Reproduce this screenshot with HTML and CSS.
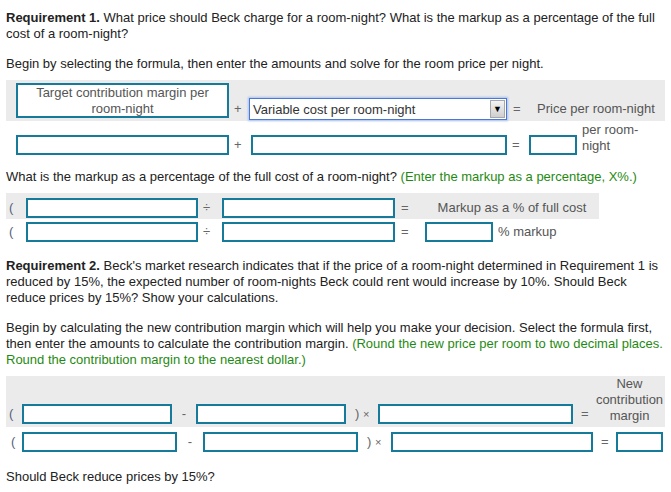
FILE: index.html
```html
<!DOCTYPE html>
<html>
<head>
<meta charset="utf-8">
<link rel="stylesheet" href="styles.css">
</head>
<body>
<div class="page">
  <p class="para"><b>Requirement 1.</b> What price should Beck charge for a room-night? What is the markup as a percentage of the full cost of a room-night?</p>
  <p class="para gap14">Begin by selecting the formula, then enter the amounts and solve for the room price per night.</p>

  <div class="band band1">
    <div class="hbox">Target contribution margin per room-night</div>
    <span class="op op-plus1">+</span>
    <div class="select"><span class="sel-text">Variable cost per room-night</span><span class="arrow">&#9660;</span></div>
    <span class="op op-eq1">=</span>
    <span class="lbl lbl1">Price per room-night</span>
  </div>
  <div class="row row1b">
    <span class="inp w213"></span>
    <span class="op op-plus2">+</span>
    <span class="inp w256"></span>
    <span class="op op-eq2">=</span>
    <span class="inp w48"></span>
    <span class="lbl unit">per room-night</span>
  </div>

  <p class="para gap14b">What is the markup as a percentage of the full cost of a room-night? <span class="green">(Enter the markup as a percentage, X%.)</span></p>

  <div class="band band2">
    <span class="paren p20">(</span>
    <span class="inp w172"></span>
    <span class="op op-div">&divide;</span>
    <span class="inp w173"></span>
    <span class="op op-eq3">=</span>
    <span class="lbl lbl2">Markup as a % of full cost</span>
  </div>
  <div class="row row2b">
    <span class="paren p20">(</span>
    <span class="inp w172"></span>
    <span class="op op-div">&divide;</span>
    <span class="inp w173"></span>
    <span class="op op-eq3">=</span>
    <span class="inp w68"></span>
    <span class="lbl unit2">% markup</span>
  </div>

  <p class="para gap16"><b>Requirement 2.</b> Beck's market research indicates that if the price of a room-night determined in Requirement 1 is reduced by 15%, the expected number of room-nights Beck could rent would increase by 10%. Should Beck reduce prices by 15%? Show your calculations.</p>
  <p class="para gap15">Begin by calculating the new contribution margin which will help you make your decision. Select the formula first, then enter the amounts to calculate the contribution margin. <span class="green">(Round the new price per room to two decimal places. Round the contribution margin to the nearest dollar.)</span></p>

  <div class="band band3">
    <span class="paren p16">(</span>
    <span class="inp w150"></span>
    <span class="op op-min1">-</span>
    <span class="inp w150"></span>
    <span class="op op-x1">)&nbsp;<span class="times">&times;</span></span>
    <span class="inp w195"></span>
    <span class="op op-eq4">=</span>
    <span class="lbl lbl3">New contribution margin</span>
  </div>
  <div class="row row3b">
    <span class="paren p16b">(</span>
    <span class="inp w155"></span>
    <span class="op op-min2">-</span>
    <span class="inp w155"></span>
    <span class="op op-x2">)&nbsp;<span class="times">&times;</span></span>
    <span class="inp w202"></span>
    <span class="op op-eq5">=</span>
    <span class="inp w47"></span>
  </div>

  <p class="para gap17">Should Beck reduce prices by 15%?</p>
</div>
</body>
</html>
```

FILE: styles.css
```css
html, body {
  margin: 0;
  padding: 0;
  background: #ffffff;
}
body {
  font-family: "Liberation Sans", Arial, sans-serif;
  font-size: 13px;
  color: #222222;
}
.page {
  padding: 10px 6px 0 6px;
}
.para {
  margin: 0;
  line-height: 16px;
  width: 659px;
}
.gap14 { margin-top: 14px; }
.gap14b { margin-top: 14px; }
.gap16 { margin-top: 16px; }
.gap15 { margin-top: 14px; }
.gap17 { margin-top: 17px; }
.green { color: #1f8a12; }

.band {
  background: #ebebeb;
  display: flex;
  align-items: flex-end;
  box-sizing: border-box;
}
.row {
  display: flex;
  align-items: flex-end;
}

.inp {
  display: block;
  box-sizing: border-box;
  height: 20px;
  border: 2px solid #167b9b;
  background: #ffffff;
  flex: none;
}
.op {
  display: block;
  flex: none;
  box-sizing: border-box;
  color: #666666;
  line-height: 20px;
  height: 20px;
}
.paren {
  display: block;
  flex: none;
  box-sizing: border-box;
  color: #555f7a;
  line-height: 20px;
  height: 20px;
}
.lbl {
  color: #555555;
  flex: none;
}

/* Requirement 1 formula */
.band1 {
  width: 659px;
  height: 41px;
  margin-top: 8px;
  padding: 0 0 1px 10px;
}
.hbox {
  align-self: center;
  box-sizing: border-box;
  width: 213px;
  height: 35px;
  border: 2px solid #167b9b;
  background: #ffffff;
  color: #555555;
  text-align: center;
  line-height: 16px;
  padding: 0 8px;
  flex: none;
}
.op-plus1 { width: 20px; padding-left: 5px; line-height: 22px; height: 22px; }
.select {
  flex: none;
  box-sizing: border-box;
  width: 258px;
  height: 22px;
  border: 1px solid #4a78d4;
  box-shadow: 0 0 2px 1px #a9c1ee;
  background: #ffffff;
  display: flex;
  align-items: center;
  justify-content: space-between;
  padding: 0 1px 0 3px;
}
.sel-text { color: #333333; }
.arrow {
  box-sizing: border-box;
  width: 15px;
  height: 18px;
  border: 1px solid #a8a8a8;
  background: linear-gradient(#f4f4f4, #cfcfcf);
  color: #000000;
  font-size: 9px;
  line-height: 17px;
  text-align: center;
}
.op-eq1 { width: 30px; padding-left: 6px; line-height: 22px; height: 22px; }
.lbl1 { line-height: 22px; }

.row1b {
  margin-top: 1px;
  padding-left: 10px;
}
.w213 { width: 213px; }
.w256 { width: 256px; }
.w48 { width: 48px; }
.op-plus2 { width: 22px; padding-left: 5px; }
.op-eq2 { width: 22px; padding-left: 5px; }
.unit {
  width: 62px;
  margin-left: 5px;
  line-height: 16px;
  margin-bottom: 1px;
}

/* Markup formula */
.band2 {
  width: 593px;
  margin-top: 8px;
  padding: 5px 0 1px 0;
}
.p20 { width: 20px; padding-left: 3px; }
.w172 { width: 172px; }
.w173 { width: 173px; }
.w68 { width: 68px; }
.op-div { width: 24px; padding-left: 5px; }
.op-eq3 { width: 30px; padding-left: 6px; }
.lbl2 {
  width: 174px;
  text-align: center;
  line-height: 20px;
}
.row2b { margin-top: 3px; }
.unit2 { margin-left: 5px; line-height: 20px; }

/* Requirement 2 formula */
.band3 {
  width: 659px;
  margin-top: 8px;
  padding: 0 0 3px 0;
}
.p16 { width: 16px; padding-left: 3px; }
.p16b { width: 16px; padding-left: 5px; }
.w150 { width: 150px; }
.w195 { width: 195px; }
.w155 { width: 155px; }
.w202 { width: 202px; }
.w47 { width: 47px; }
.op-min1 { width: 24px; text-align: center; }
.op-min2 { width: 26px; text-align: center; }
.op-x1 { width: 32px; padding-left: 9px; }
.op-x2 { width: 33px; padding-left: 9px; }
.times { font-size: 11px; }
.op-eq4 { width: 21px; padding-left: 8px; }
.op-eq5 { width: 23px; padding-left: 8px; }
.lbl3 {
  width: 71px;
  text-align: center;
  line-height: 16px;
}
.row3b { margin-top: 5px; }
```
